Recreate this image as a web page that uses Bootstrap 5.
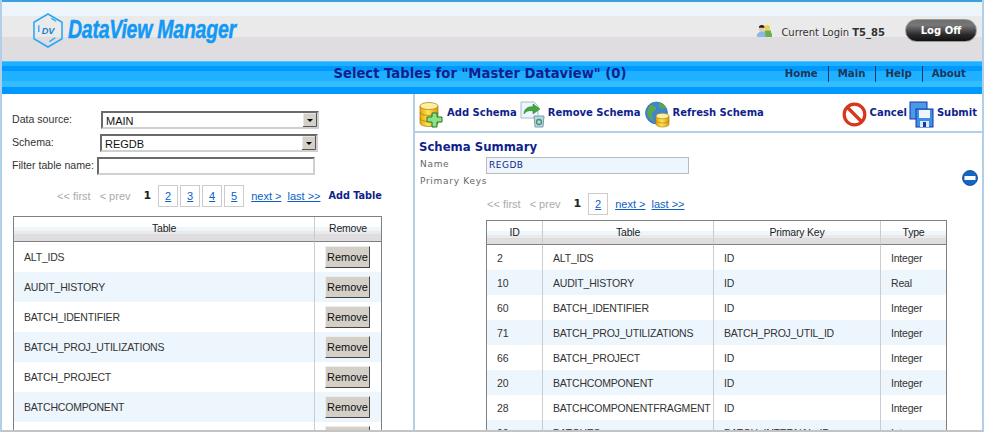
<!DOCTYPE html>
<html lang="en">
<head>
<meta charset="UTF-8">
<title>DataView Manager - Select Tables</title>
<link href="https://cdn.jsdelivr.net/npm/bootstrap@5.3.3/dist/css/bootstrap.min.css" rel="stylesheet">
<style>
html, body { height: 432px; overflow: hidden; background: #fff; }
body { font-family: "Liberation Sans", Arial, sans-serif; font-size: 11px; color: #222; }
.app-frame { width: 984px; height: 432px; overflow: hidden; border-left: 2px solid #b3cfe8; border-right: 2px solid #b3cfe8; border-bottom: 2px solid #c4c4c4; position: relative; }

/* header */
.top-head { height: 61px; margin: 0 -2px; border: solid #3d9fdc; border-width: 2px 2px 0; background: linear-gradient(#eef6fd 0 14px, #eaeaea 14px 35px, #dfdde0 35px); }
.logo-wrap { padding: 10px 0 0 30px; }
.logo-text { font-family: "Liberation Sans", Arial, sans-serif; font-weight: 700; font-style: italic; font-size: 25px; line-height: 28px; color: #1199f5; -webkit-text-stroke: .5px #1199f5; margin: 3px 0 0 4px; letter-spacing: -.3px; transform: scaleX(.78); transform-origin: left; white-space: nowrap; }
.login-box { padding: 17px 5px 0 0; }
.login-icon { margin-top: 5px; }
.login-text { font-family: "DejaVu Sans", Verdana, sans-serif; font-size: 10px; line-height: 16px; margin: 6px 20px 0 9px; color: #333; white-space: nowrap; }
.logoff-btn { width: 72px; height: 23px; padding: 0; border-radius: 12px; border: 1px solid #999; background: linear-gradient(#6e6e6e, #777 25%, #2a2a2a 70%, #111); color: #fff; font-family: "DejaVu Sans", Verdana, sans-serif; font-weight: 700; font-size: 10px; line-height: 1; }
.blue-band { height: 33px; margin: 0 -2px; border: solid #3d9fdc; border-width: 0 2px; background: linear-gradient(#4fc4ff 0 1px, #1fb0ff 1px 5px, #0099ff 5px 10px, #1fb0ff 10px 20px, #33bdff 20px 26px, #0099ff 26px); }
.band-title { left: 0; right: 24px; top: 5px; text-align: center; font-family: "DejaVu Sans", Verdana, sans-serif; font-weight: 700; font-size: 13.2px; line-height: 16px; color: #101f8c; }
.band-nav { padding: 5px 6px 0 0; position: relative; }
.band-nav a { font-family: "DejaVu Sans", Verdana, sans-serif; font-weight: 700; font-size: 10.2px; line-height: 16px; color: #1d3558; text-decoration: none; padding: 0 10px 0 9px; border-left: 1px solid #1d3558; }
.band-nav a:first-child { border-left: 0; }

/* panels */
.main-split { height: 336px; }
.left-panel { width: 413px; flex: none; padding: 14px 0 0 11px; border-right: 2px solid #b3cfe8; overflow: hidden; }
.right-panel { flex: 1; min-width: 0; overflow: hidden; position: relative; }
.field-row { height: 23px; }
.field-label { flex: none; margin-left: -1px; font-family: "Liberation Sans", Arial, sans-serif; font-size: 10.6px; color: #333; white-space: nowrap; }
.label-source { width: 89px; }
.label-schema { width: 88px; }
.label-filter { width: 85px; }
.win-field { display: block; width: 218px; height: 18px; padding: 0 0 0 3px; border: 2px solid; border-color: #6a6a6a #d0d0d0 #d0d0d0 #6a6a6a; border-radius: 0; background-color: #fff; font-family: "Liberation Sans", Arial, sans-serif; font-size: 11px; color: #111; appearance: none; outline: 0; }
select.win-field { background-image: url("data:image/svg+xml,%3Csvg xmlns='http://www.w3.org/2000/svg' width='14' height='14'%3E%3Crect width='14' height='14' fill='%23d4d0c8'/%3E%3Cpath d='M0 14V0h14' fill='none' stroke='%23fff'/%3E%3Cpath d='M0 13.5h13.5V0' fill='none' stroke='%23555'/%3E%3Cpath d='M4 6h6l-3 3z' fill='%23000'/%3E%3C/svg%3E"); background-repeat: no-repeat; background-position: right 0 center; }
.pager-row { height: 24px; font-family: "Liberation Sans", Arial, sans-serif; font-size: 11px; white-space: nowrap; }
.left-pager { margin-top: 7px; padding-left: 44px; }
.right-pager { margin-top: 2px; padding-left: 72px; }
.pg-off { color: #aaa; }
.pg-prev { margin-left: 9px; }
.pg-cur { color: #222; font-weight: 700; font-family: "DejaVu Sans", sans-serif; margin: 0 7px 0 13px; }
.pg-link { color: #0b5fc4; text-decoration: underline; }
.pg-box { display: block; width: 20px; height: 22px; line-height: 20px; text-align: center; border: 1px solid #ccc; }
.pg-box + .pg-box { margin-left: 2px; }
.pg-next { margin-left: 7px; }
.pg-last { margin-left: 6px; }
.add-link { font-family: "DejaVu Sans", Verdana, sans-serif; font-weight: 700; font-size: 9.7px; color: #101f8c; text-decoration: none; margin-left: 8px; }

/* tables */
.data-grid { border-collapse: separate; border-spacing: 0; table-layout: fixed; margin: 0; border: 1px solid #808080; border-bottom: 0; font-size: 10.5px; letter-spacing: -.2px; color: #333; }
.data-grid > thead > tr > th { font-weight: 400; text-align: center; vertical-align: middle; padding: 0; border: 0; border-right: 1px solid #ccc; border-bottom: 1px solid #808080; color: #222; background: linear-gradient(#fff 0 10px, #eef6fd 10px 14px, #eaeaea 14px 17px, #dfdde0 17px); }
.data-grid > thead > tr > th:last-child, .data-grid > tbody > tr > td:last-child { border-right: 0; }
.data-grid > tbody > tr > td { padding: 2px 0 0 10px; border: 0; border-right: 1px solid #ccc; vertical-align: middle; white-space: nowrap; overflow: hidden; background: #fff; color: #333; }
.data-grid > tbody > tr:nth-child(even) > td { background: #eef6fd; }
.left-grid { width: 369px; margin-top: 8px; }
.left-col { width: 301px; }
.left-grid thead tr { height: 25px; }
.left-grid tbody tr { height: 30px; }
.right-wrap { padding: 4px 0 0 71px; }
.right-grid { width: 461px; }
.id-col { width: 56px; }
.name-col { width: 171px; }
.key-col { width: 167px; }
.right-grid thead tr { height: 24px; }
.right-grid tbody tr { height: 25px; }
.remove-btn { display: block; width: 45px; height: 22px; margin-top: -2px; padding: 0; border: 1px solid; border-color: #eee #444 #444 #eee; border-radius: 0; background: #d4d0c8; font-size: 11px; color: #111; }

/* toolbar */
.tool-bar { height: 39px; padding: 7px 5px 0 4px; border-bottom: 2px solid #b3cfe8; }
.tool-btn { gap: 3px; font-family: "DejaVu Sans", Verdana, sans-serif; font-weight: 700; font-size: 10px; line-height: 23px; color: #101f8c; text-decoration: none; white-space: nowrap; }
.tool-first { gap: 4px; }
.tool-gap { margin-left: 3px; }
.tool-gap-wide { margin-left: 4px; }
.tool-gap-narrow { margin-left: 2px; }
.summary-title { font-family: "DejaVu Sans", Verdana, sans-serif; font-weight: 700; font-size: 11.7px; line-height: 14px; color: #101f8c; margin: 7px 0 2px 4px; }
.sum-row { height: 18px; padding-left: 5px; }
.sum-row-short { height: 16px; }
.sum-label { width: 66px; flex: none; font-family: "DejaVu Sans", Verdana, sans-serif; font-size: 9px; letter-spacing: .7px; color: #666; white-space: nowrap; }
.sum-value { width: 203px; height: 17px; line-height: 15px; padding-left: 2px; border: 1px solid #bbb; background: #eef6fd; font-family: "DejaVu Sans", Verdana, sans-serif; font-size: 9px; letter-spacing: .5px; color: #101f8c; }
.collapse-icon { position: absolute; right: 4px; top: 76px; }
</style>
</head>
<body>
<div class="app-frame d-flex flex-column">

  <!-- Header -->
  <div class="top-head d-flex justify-content-between">
    <div class="logo-wrap d-flex align-items-start">
      <svg width="32" height="37" viewBox="0 0 33 37">
        <path d="M16.500 1.500 31 10v17L16.500 35.500 2 27V10z" fill="none" stroke="#2aa8f6" stroke-width="1.600"/>
        <path d="M20 6l5 3M24 26l-6 4M7 13v7" fill="none" stroke="#2aa8f6" stroke-width="1.400"/>
        <text x="10" y="22" font-family="Liberation Sans" font-size="9.500" font-weight="700" font-style="italic" fill="#1a80c8">DV</text>
      </svg>
      <div class="logo-text">DataView Manager</div>
    </div>
    <div class="login-box d-flex align-items-start">
      <svg class="login-icon" width="15" height="14" viewBox="0 0 16 15">
        <circle cx="11" cy="4" r="3" fill="#f2d24a"/><path d="M8 7h7v3h1v4H8z" fill="#68b04a"/>
        <circle cx="5" cy="5" r="3" fill="#f0c9a0"/><path d="M2 4a3 3 0 0 1 6 0z" fill="#222"/><path d="M0 14v-3l3-3h4l2 3v3z" fill="#8db8e4"/>
      </svg>
      <span class="login-text">Current Login <b>T5_85</b></span>
      <button class="logoff-btn btn" type="button">Log Off</button>
    </div>
  </div>

  <div class="blue-band d-flex justify-content-end position-relative">
    <div class="band-title position-absolute">Select Tables for "Master Dataview" (0)</div>
    <div class="band-nav d-flex align-items-start">
      <a href="#">Home</a><a href="#">Main</a><a href="#">Help</a><a href="#">About</a>
    </div>
  </div>

  <div class="main-split d-flex">

    <!-- Left: table picker -->
    <div class="left-panel">
      <div class="field-row d-flex align-items-center">
        <span class="field-label label-source">Data source:</span>
        <select class="win-field"><option>MAIN</option></select>
      </div>
      <div class="field-row d-flex align-items-center">
        <span class="field-label label-schema">Schema:</span>
        <select class="win-field"><option>REGDB</option></select>
      </div>
      <div class="field-row d-flex align-items-center">
        <span class="field-label label-filter">Filter table name:</span>
        <input class="win-field" type="text">
      </div>
      <div class="pager-row left-pager d-flex align-items-center">
        <span class="pg-off">&lt;&lt; first</span>
        <span class="pg-off pg-prev">&lt; prev</span>
        <span class="pg-cur">1</span>
        <a class="pg-link pg-box" href="#">2</a>
        <a class="pg-link pg-box" href="#">3</a>
        <a class="pg-link pg-box" href="#">4</a>
        <a class="pg-link pg-box" href="#">5</a>
        <a class="pg-link pg-next" href="#">next &gt;</a>
        <a class="pg-link pg-last" href="#">last &gt;&gt;</a>
        <a class="add-link" href="#">Add Table</a>
      </div>
      <table class="table data-grid left-grid">
        <colgroup><col class="left-col"><col></colgroup>
        <thead><tr><th>Table</th><th>Remove</th></tr></thead>
        <tbody id="leftRows"></tbody>
      </table>
    </div>

    <!-- Right: schema summary -->
    <div class="right-panel">
      <div class="tool-bar d-flex align-items-start">
        <a class="tool-btn tool-first d-flex" href="#">
          <svg width="24" height="27" viewBox="0 0 24 27">
            <defs><linearGradient id="gold" x1="0" x2="1" y1="0" y2="0"><stop offset="0" stop-color="#e8a808"/><stop offset=".45" stop-color="#ffe25a"/><stop offset="1" stop-color="#d89a08"/></linearGradient></defs>
            <path d="M1 5v17c0 2 4 3.500 9 3.500s9-1.500 9-3.500V5z" fill="url(#gold)" stroke="#a87a10" stroke-width=".7"/>
            <path d="M1 11c0 2 4 3.500 9 3.500s9-1.500 9-3.500M1 17c0 2 4 3.500 9 3.500s9-1.500 9-3.500" fill="none" stroke="#a87a10" stroke-width=".7"/>
            <ellipse cx="10" cy="5" rx="9" ry="3.500" fill="#fff0a0" stroke="#a87a10" stroke-width=".7"/>
            <path d="M13 12h5v4h5v5h-5v5h-5v-5H8v-5h5z" fill="#8fe08a" stroke="#1d7a1d"/>
          </svg>
          Add Schema
        </a>
        <a class="tool-btn tool-gap d-flex" href="#">
          <svg width="25" height="27" viewBox="0 0 25 27">
            <path d="M1 1h13l4 4v12H1z" fill="#eef5fc" stroke="#a8b8cc"/>
            <path d="M4 13c0-5 4-8 9-7V3l7 5-7 5v-3c-4-1-7 0-9 3z" fill="#3fa83f" stroke="#2a7a2a" stroke-width=".5"/>
            <path d="M14 15h10l-1 11h-8z" fill="#b8d4ea" stroke="#7d9cba"/>
            <circle cx="19" cy="21" r="2.500" fill="none" stroke="#3f9a4a" stroke-width="1.300"/>
          </svg>
          Remove Schema
        </a>
        <a class="tool-btn tool-gap-wide d-flex" href="#">
          <svg width="25" height="27" viewBox="0 0 25 27">
            <circle cx="11.500" cy="12" r="11" fill="#3f86d0" stroke="#2a5f9c" stroke-width=".6"/>
            <path d="M5 4c3 0 5 1 6 3S8 10 7 12s1 5 2 8c-4-2-7-5-7-9zM14 2c3 0 6 2 7 5l-4 1-3-2z" fill="#5aa84a"/>
            <path d="M11 15v8c0 1.800 3 3 6.500 3s6.500-1.200 6.500-3v-8z" fill="url(#gold)" stroke="#a87a10" stroke-width=".6"/>
            <path d="M11 19c0 1.800 3 3 6.500 3s6.500-1.200 6.500-3" fill="none" stroke="#a87a10" stroke-width=".6"/>
            <ellipse cx="17.500" cy="15" rx="6.500" ry="2.800" fill="#fff0a0" stroke="#a87a10" stroke-width=".6"/>
          </svg>
          Refresh Schema
        </a>
        <a class="tool-btn d-flex ms-auto" href="#">
          <svg width="25" height="27" viewBox="0 0 25 27">
            <circle cx="12.500" cy="13.500" r="10.300" fill="#fff" stroke="#d8361c" stroke-width="3.200"/>
            <path d="M5.500 6.500l14 14" stroke="#d8361c" stroke-width="3.400"/>
          </svg>
          Cancel
        </a>
        <a class="tool-btn tool-gap-narrow d-flex" href="#">
          <svg width="25" height="27" viewBox="0 0 25 27">
            <rect x="1" y="1" width="17" height="17" fill="#4a9ae8" stroke="#1438a8"/>
            <rect x="7" y="8" width="17" height="18" fill="#3d8ee6" stroke="#1438a8"/>
            <rect x="10" y="9" width="11" height="8" fill="#eef6fd"/>
            <rect x="11" y="20" width="9" height="6" fill="#dce9f6"/>
            <rect x="14" y="21" width="3" height="5" fill="#1438a8"/>
          </svg>
          Submit
        </a>
      </div>
      <div class="summary-title">Schema Summary</div>
      <div class="sum-row d-flex align-items-center">
        <span class="sum-label">Name</span>
        <div class="sum-value">REGDB</div>
      </div>
      <div class="sum-row sum-row-short d-flex align-items-center">
        <span class="sum-label">Primary Keys</span>
      </div>
      <svg class="collapse-icon" width="16" height="16" viewBox="0 0 16 16">
        <circle cx="8" cy="8" r="7.500" fill="#1566c4" stroke="#0d3f86" stroke-width=".8"/>
        <rect x="2.500" y="6" width="11" height="4" fill="#fff"/>
      </svg>
      <div class="pager-row right-pager d-flex align-items-center">
        <span class="pg-off">&lt;&lt; first</span>
        <span class="pg-off pg-prev">&lt; prev</span>
        <span class="pg-cur">1</span>
        <a class="pg-link pg-box" href="#">2</a>
        <a class="pg-link pg-next" href="#">next &gt;</a>
        <a class="pg-link pg-last" href="#">last &gt;&gt;</a>
      </div>
      <div class="right-wrap">
        <table class="table data-grid right-grid">
          <colgroup><col class="id-col"><col class="name-col"><col class="key-col"><col></colgroup>
          <thead><tr><th>ID</th><th>Table</th><th>Primary Key</th><th>Type</th></tr></thead>
          <tbody id="rightRows"></tbody>
        </table>
      </div>
    </div>
  </div>
</div>

<script src="https://cdn.jsdelivr.net/npm/bootstrap@5.3.3/dist/js/bootstrap.bundle.min.js"></script>
<script>
// table rows for both grids
const leftRows = ['ALT_IDS', 'AUDIT_HISTORY', 'BATCH_IDENTIFIER', 'BATCH_PROJ_UTILIZATIONS', 'BATCH_PROJECT', 'BATCHCOMPONENT', 'BATCHCOMPONENTFRAGMENT'];
const rightRows = [
    [2, 'ALT_IDS', 'ID', 'Integer'],
    [10, 'AUDIT_HISTORY', 'ID', 'Real'],
    [60, 'BATCH_IDENTIFIER', 'ID', 'Integer'],
    [71, 'BATCH_PROJ_UTILIZATIONS', 'BATCH_PROJ_UTIL_ID', 'Integer'],
    [66, 'BATCH_PROJECT', 'ID', 'Integer'],
    [20, 'BATCHCOMPONENT', 'ID', 'Integer'],
    [28, 'BATCHCOMPONENTFRAGMENT', 'ID', 'Integer'],
    [90, 'BATCHES', 'BATCH_INTERNAL_ID', 'Integer']
];
document.getElementById('leftRows').innerHTML = leftRows.map(name =>
    `<tr><td>${name}</td><td><button class="btn remove-btn" type="button">Remove</button></td></tr>`).join('');
document.getElementById('rightRows').innerHTML = rightRows.map(row =>
    '<tr>' + row.map(cell => `<td>${cell}</td>`).join('') + '</tr>').join('');
</script>
</body>
</html>
